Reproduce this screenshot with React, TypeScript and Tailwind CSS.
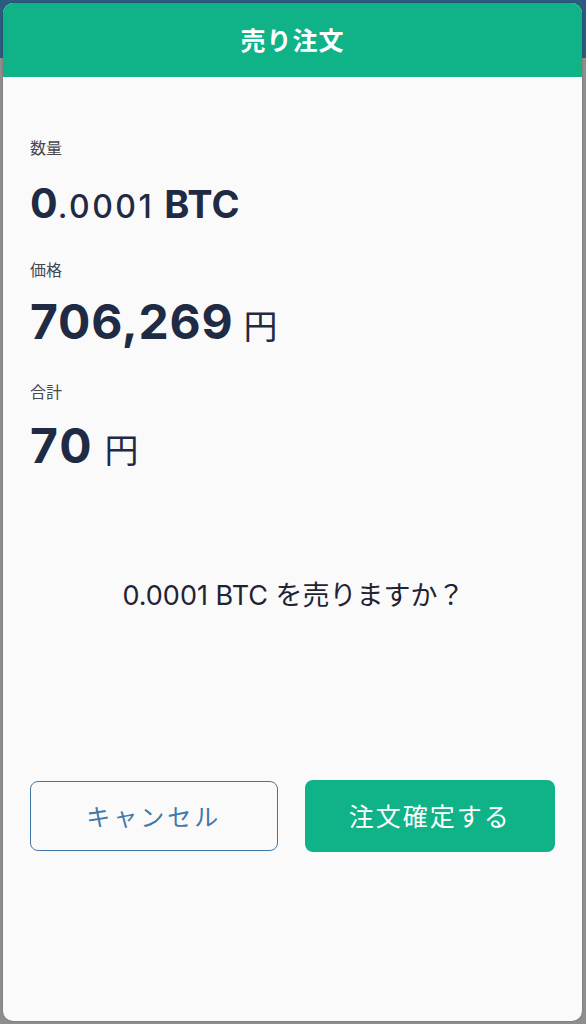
import React from "react";

const sans = 'Inter, "Noto Sans CJK JP", sans-serif';
const cjk = '"Noto Sans CJK JP", sans-serif';

export default function App() {
  return (
    <div
      className="relative w-[586px] h-[1024px] bg-[#8e8e8e] overflow-hidden"
      style={{ fontFamily: sans }}
    >
      <div className="absolute left-0 top-0 w-full h-[58px] bg-[#2b5b7e]" />
      <div className="absolute left-[3px] top-[3px] w-[579px] h-[1018px] rounded-[10px] overflow-hidden bg-[#fafafa] flex flex-col shadow-[0_0_2px_rgba(0,0,0,0.3)]">
        <div className="h-[74px] bg-[#10b387] flex items-center justify-center">
          <span className="text-white text-[25px] font-bold tracking-[1px]" style={{ fontFamily: cjk }}>売り注文</span>
        </div>
        <div className="flex flex-col px-[27px] pt-[59px]">
          <div className="text-[16px] leading-[22px] text-[#444850]" style={{ fontFamily: cjk }}>数量</div>
          <div className="mt-[25px] h-[49px] flex items-baseline text-[#1f2a44]">
            <span className="text-[41px] font-bold leading-none">0</span>
            <span className="text-[32px] font-medium leading-none tracking-[2.5px]">.0001</span>
            <span className="text-[38px] font-bold leading-none ml-[10px]">BTC</span>
          </div>
          <div className="mt-[26px] text-[16px] leading-[22px] text-[#444850]" style={{ fontFamily: cjk }}>価格</div>
          <div className="mt-[18px] h-[54px] flex items-baseline text-[#1f2a44]">
            <span className="text-[48px] font-bold leading-none tracking-[0.8px]">706,269</span>
            <span className="text-[34px] leading-none ml-[10px]" style={{ fontFamily: cjk }}>円</span>
          </div>
          <div className="mt-[28px] text-[16px] leading-[22px] text-[#444850]" style={{ fontFamily: cjk }}>合計</div>
          <div className="mt-[20px] h-[54px] flex items-baseline text-[#1f2a44]">
            <span className="text-[48px] font-bold leading-none tracking-[2px]">70</span>
            <span className="text-[34px] leading-none ml-[11px]" style={{ fontFamily: cjk }}>円</span>
          </div>
        </div>
        <div className="mt-[100px] text-center text-[27px] text-[#1f2435] pl-[2px]">
          0.0001 BTC を売りますか？
        </div>
        <div className="mt-[164px] px-[27px] flex gap-[27px]">
          <button className="w-[248px] h-[70px] rounded-[8px] border-[1.5px] border-[#3f78a8] text-[#3f78aa] text-[24px] tracking-[3px] bg-transparent" style={{ fontFamily: cjk }}>
            キャンセル
          </button>
          <button className="w-[251px] h-[72px] -mt-[1px] rounded-[8px] bg-[#10b387] text-white text-[25px] tracking-[2px]" style={{ fontFamily: cjk }}>
            注文確定する
          </button>
        </div>
      </div>
    </div>
  );
}
